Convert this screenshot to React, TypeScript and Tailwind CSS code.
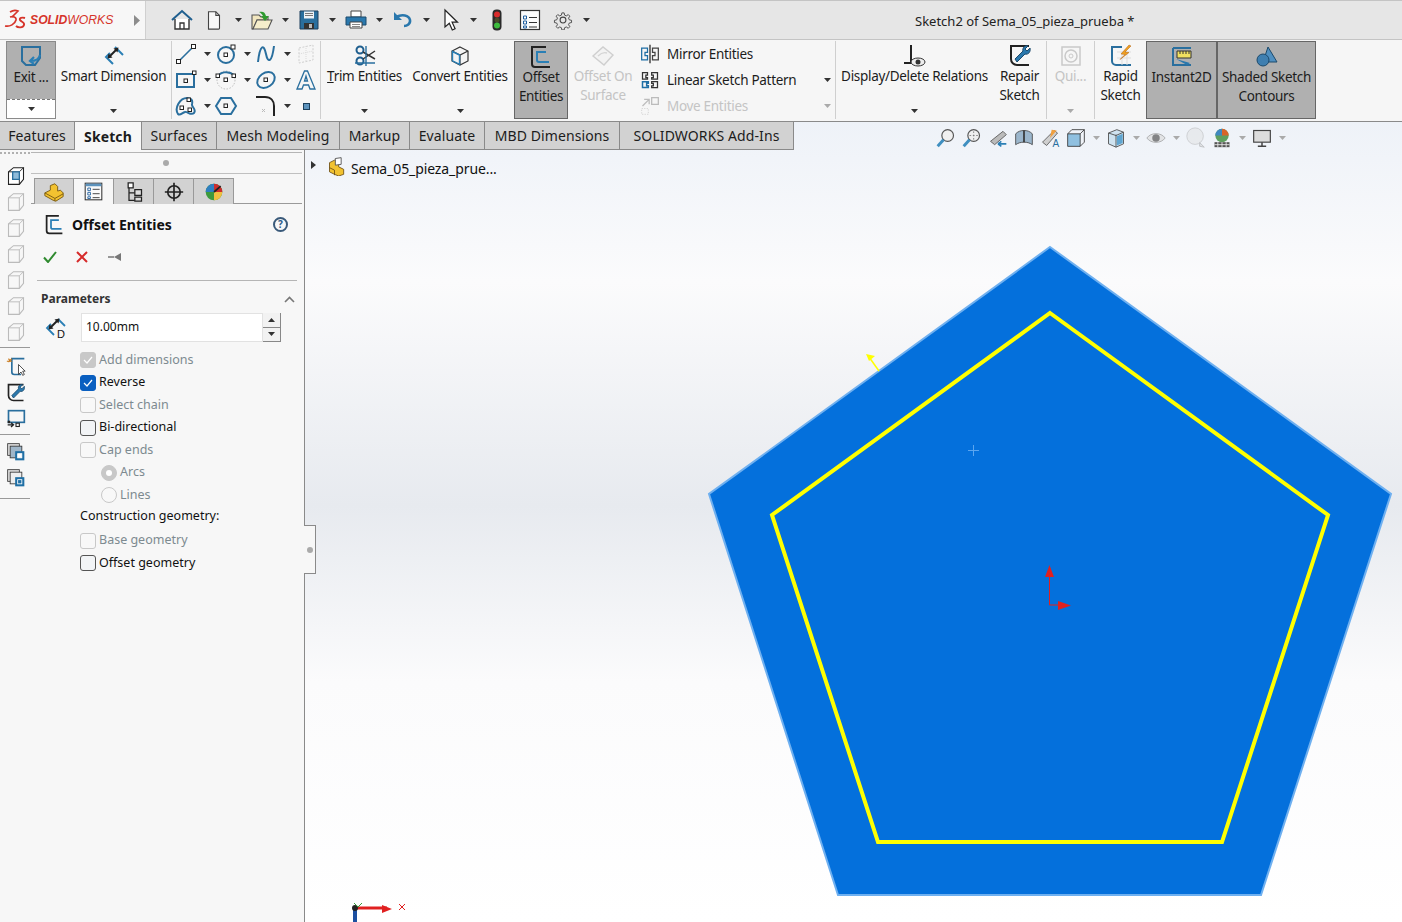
import React from "react";

const B = "#2a6f9e";

function Caret({ c = "#333" }: { c?: string }) {
  return (
    <svg width="7" height="4" viewBox="0 0 7 4" className="shrink-0">
      <path d="M0 0h7L3.5 4z" fill={c} />
    </svg>
  );
}

function Ico({ children, s = 24, o = 1 }: { children: React.ReactNode; s?: number; o?: number }) {
  return (
    <svg width={s} height={s} viewBox="0 0 24 24" fill="none" className="shrink-0" opacity={o}>
      {children}
    </svg>
  );
}

// ---- top bar icons
const Home = () => (
  <Ico>
    <path d="M2 12 12 3l10 9" stroke="#1f5f8f" strokeWidth="2" />
    <path d="M5 11v10h14V11" stroke="#333" strokeWidth="1.4" fill="#fff" />
    <path d="M10 21v-6h4v6" stroke="#333" strokeWidth="1.3" />
  </Ico>
);
const NewDoc = () => (
  <Ico s={22}>
    <path d="M6 3h8l4 4v14a1 1 0 0 1-1 1H6z" fill="#f8f8f8" stroke="#444" strokeWidth="1.2" />
    <path d="M14 3v4h4" stroke="#444" strokeWidth="1.2" />
  </Ico>
);
const OpenDoc = () => (
  <Ico>
    <path d="M2 7h7l2 2h7v3H7L3 21H2z" fill="#f1e6bf" stroke="#555" strokeWidth="1.1" />
    <path d="M7 12h15l-4 9H3z" fill="#f6eecb" stroke="#555" strokeWidth="1.1" />
    <path d="M9 4c4-1 6 0 7 4h3l-4 5-4-5h2c-1-2-2-3-4-4z" fill="#2f9a2f" />
  </Ico>
);
const Save = () => (
  <Ico>
    <path d="M3 3h18v18H3z" fill="#2a6f9e" stroke="#1c3f5c" />
    <path d="M7 3.5h10v7H7z" fill="#eef2f6" />
    <path d="M8 5.5h8M8 7.5h8" stroke="#777" />
    <path d="M7 15h10v6H7z" fill="#333" />
    <path d="M12 16h3v4h-3z" fill="#bbb" />
  </Ico>
);
const Printer = () => (
  <Ico>
    <path d="M7 3h10v6H7z" fill="#fff" stroke="#444" />
    <path d="M2 9h20v8H2z" fill="#2a78ad" stroke="#1c4a6c" />
    <path d="M6 14h12v6H6z" fill="#fff" stroke="#444" />
    <path d="M8 16.5h8M8 18.5h8" stroke="#888" />
  </Ico>
);
const Undo = () => (
  <Ico>
    <path d="M5 9c6-3 13-2 14 3 .6 4-3 6-6 6" stroke="#2a78ad" strokeWidth="2.6" />
    <path d="M3 4v8h8z" fill="#2a78ad" />
  </Ico>
);
const Cursor = () => (
  <Ico>
    <path d="M7 2v17l4.3-3.800 3 6.800 2.800-1.200-3-6.600H19.500z" fill="#fff" stroke="#222" strokeWidth="1.2" />
  </Ico>
);
const Light = () => (
  <Ico>
    <rect x="7.5" y="1.5" width="9" height="21" rx="4" fill="#2a2a2a" />
    <circle cx="12" cy="6.500" r="3" fill="#d92b2b" />
    <circle cx="12" cy="12" r="2.500" fill="#4a4a2a" />
    <circle cx="12" cy="17.500" r="3" fill="#3dbb3d" />
  </Ico>
);
const ListIco = ({ s = 24, head = false }: { s?: number; head?: boolean }) => (
  <Ico s={s}>
    <rect x="2.5" y="2.5" width="19" height="19" fill="#fbfbfb" stroke="#333" strokeWidth="1.2" />
    {head && <rect x="3" y="3" width="18" height="3" fill="#5d93bd" />}
    <path d="M5.500 8h3v3h-3zM5.500 13h3v3h-3zM5.500 18h3v2h-3z" stroke="#1f5f9f" />
    <path d="M11 9.500h8M11 14.500h8M11 19h8" stroke="#333" />
  </Ico>
);
const Gear = () => (
  <Ico s={20}>
    <circle cx="12" cy="12" r="3.500" stroke="#444" strokeWidth="1.300" />
    <path
      d="M10.500 2.500h3l.6 3 2.300 1 2.600-1.700 2.100 2.100-1.700 2.600 1 2.300 3 .6v3l-3 .6-1 2.300 1.700 2.600-2.100 2.100-2.600-1.700-2.300 1-.6 3h-3l-.6-3-2.300-1-2.600 1.700-2.100-2.100 1.700-2.600-1-2.300-3-.6v-3l3-.6 1-2.300-1.700-2.600 2.100-2.100 2.600 1.700 2.300-1z"
      stroke="#444"
      strokeWidth="1.200"
      transform="translate(1.200 1.200) scale(.9)"
    />
  </Ico>
);

// ---- ribbon icons
const ExitIco = () => (
  <Ico>
    <path d="M3 3h18v11l-5 7H7l-4-4z" stroke={B} strokeWidth="2" />
    <path d="M21 11c-1 4-4 6-9 6M15 13l-4 4 4 3" stroke="#2a7fb5" strokeWidth="2.200" />
  </Ico>
);
const SmartDim = () => (
  <Ico>
    <path d="M13 3l8 8" stroke="#2a7fb5" strokeWidth="2" />
    <path d="M8 9l-4 4 7 7" stroke="#2a7fb5" strokeWidth="2" />
    <path d="M8 12l6-6" stroke="#222" strokeWidth="2" />
    <path d="M5.500 14.500l1-5 4 4zM16.500 3.500l-1 5-4-4z" fill="#222" />
  </Ico>
);
const DimD = () => (
  <Ico>
    <path d="M14 3l7 7" stroke="#2a7fb5" strokeWidth="1.800" />
    <path d="M7 8l-4 4 7 7" stroke="#2a7fb5" strokeWidth="1.800" />
    <path d="M7 11l6-6" stroke="#222" strokeWidth="2" />
    <path d="M4.500 13.500l1-5 4 4zM15.500 2.500l-1 5-4-4z" fill="#222" />
    <text x="13" y="22" fontSize="11" fill="#111" fontFamily="Liberation Sans, sans-serif">D</text>
  </Ico>
);
const LineIco = () => (
  <Ico>
    <path d="M5 19 19 5" stroke={B} strokeWidth="1.600" />
    <rect x="2.5" y="17.5" width="4" height="4" fill="#fff" stroke="#222" />
    <rect x="17.5" y="2.5" width="4" height="4" fill="#fff" stroke="#222" />
  </Ico>
);
const CircleIco = () => (
  <Ico>
    <circle cx="12" cy="13" r="8" stroke={B} strokeWidth="2" />
    <rect x="10" y="11" width="3.5" height="3.5" fill="#fff" stroke="#222" />
    <rect x="17" y="3" width="4" height="4" fill="#fff" stroke="#222" />
  </Ico>
);
const SplineIco = () => (
  <Ico>
    <path d="M4 20C6 2 10 2 12 12s6 8 8-8" stroke={B} strokeWidth="2" />
  </Ico>
);
const PlaneIco = () => (
  <Ico o={0.35}>
    <path d="M5 6l14-3v15L5 21z" stroke="#888" strokeDasharray="2 1.500" />
    <path d="M5 12l14-3M12 4v16" stroke="#aaa" strokeDasharray="1 1" />
  </Ico>
);
const RectIco = () => (
  <Ico>
    <rect x="3" y="6" width="17" height="13" stroke={B} strokeWidth="2" />
    <rect x="10" y="11" width="3.5" height="3.5" stroke="#222" />
    <rect x="18.5" y="3" width="3.5" height="3.5" fill="#fff" stroke="#222" />
  </Ico>
);
const ArcIco = () => (
  <Ico>
    <circle cx="12" cy="12" r="9" stroke="#bbb" strokeDasharray="1.500 1.500" />
    <path d="M3 10C5 4 14 2 20 7" stroke={B} strokeWidth="2" />
    <rect x="2" y="6" width="3.5" height="3.5" fill="#fff" stroke="#222" />
    <rect x="10" y="10" width="3.5" height="3.5" fill="#fff" stroke="#222" />
    <rect x="18" y="6" width="3.5" height="3.5" fill="#fff" stroke="#222" />
  </Ico>
);
const EllipseIco = () => (
  <Ico>
    <ellipse cx="12" cy="12" rx="9.500" ry="7" stroke={B} strokeWidth="2" transform="rotate(-35 12 12)" />
    <rect x="10" y="10" width="3.5" height="3.5" stroke="#222" />
  </Ico>
);
const TextIco = () => (
  <Ico>
    <path d="M3 21 10.500 3h3L21 21h-5l-1.500-4h-5L8 21zM10.500 13h3L12 8z" stroke={B} strokeWidth="1.300" />
  </Ico>
);
const BlobIco = () => (
  <Ico>
    <path d="M4 20C0 14 6 4 13 4c4 0 6 2 5 6-1 3 5 5 2 9-3 3-7-2-9-1-3 1-5 4-7 2z" stroke={B} strokeWidth="2" />
    <rect x="6" y="12" width="3.5" height="3.5" fill="#fff" stroke="#222" />
    <rect x="13" y="4" width="3.5" height="3.5" fill="#fff" stroke="#222" />
    <rect x="14" y="14" width="3.5" height="3.5" fill="#fff" stroke="#222" />
  </Ico>
);
const HexIco = () => (
  <Ico>
    <path d="M7 4h10l5 8-5 8H7l-5-8z" stroke={B} strokeWidth="2" />
    <rect x="10" y="10" width="3.5" height="3.5" stroke="#222" />
  </Ico>
);
const FilletIco = () => (
  <Ico>
    <path d="M2 3h9c6 0 9 4 9 9v10" stroke="#222" strokeWidth="2" />
    <path d="M8 15l3 3M11 15l-3 3" stroke="#bbb" />
  </Ico>
);
const PointIco = () => (
  <svg width="7" height="7" className="shrink-0">
    <rect x=".5" y=".5" width="6" height="6" fill="#5d93bd" stroke="#1c3f5c" />
  </svg>
);
const TrimIco = () => (
  <Ico>
    <circle cx="7" cy="6" r="3.500" stroke="#1f5f8f" strokeWidth="2" />
    <circle cx="7" cy="17" r="3.500" stroke="#1f5f8f" strokeWidth="2" />
    <path d="M10 8l12 7M10 15 22 7" stroke="#333" strokeWidth="1.500" />
    <path d="M13 2v20M2 19h20" stroke={B} strokeWidth="1.400" />
  </Ico>
);
const ConvertIco = () => (
  <Ico>
    <path d="M12 3l8 4v10l-8 4-8-4V7z" fill="#f4f4f4" stroke="#333" strokeWidth="1.200" />
    <path d="M4 7l8 4 8-4M12 11v10" stroke="#333" strokeWidth="1.200" />
    <path d="M4.500 7.500 11.500 11v9.300l-7-3.500z" stroke="#2a7fb5" strokeWidth="1.400" />
  </Ico>
);
const OffsetIco = ({ s = 24 }: { s?: number }) => (
  <Ico s={s}>
    <path d="M21 22H6a3 3 0 0 1-3-3V2h14" stroke="#222" strokeWidth="2" />
    <path d="M20 17H10a2 2 0 0 1-2-2V7h9" stroke="#2a7fb5" strokeWidth="2" />
  </Ico>
);
const OffsetSurfIco = () => (
  <Ico o={0.35}>
    <path d="M2 12 12 3l10 8-9 10z" fill="#eee" stroke="#888" strokeWidth="1.400" />
    <path d="M7 12c3-3 6-4 9-3" stroke="#999" strokeWidth="1.400" />
  </Ico>
);
const MirrorIco = () => (
  <Ico s={20}>
    <path d="M12 1v22" stroke="#222" strokeWidth="1.500" />
    <path d="M2 5h7v5H6v4h3v5H2z" stroke="#1f6fa5" strokeWidth="1.500" />
    <path d="M22 5h-7v5h3v4h-3v5h7z" stroke="#444" strokeWidth="1.500" />
  </Ico>
);
const PatternIco = () => (
  <Ico s={20}>
    <path d="M3 3h6v3H7v3h2v2H3zM14 3h7v8h-7V9h2V6h-2z" stroke="#333" strokeWidth="1.500" />
    <path d="M3 14h7v2H8v3h2v2H3z" stroke="#1f6fa5" strokeWidth="1.800" />
    <path d="M14 14h7v7h-7v-2h2v-3h-2z" stroke="#333" strokeWidth="1.500" />
  </Ico>
);
const MoveIco = () => (
  <Ico s={20} o={0.4}>
    <path d="M14 2h8v8h-8z" stroke="#666" strokeWidth="1.500" />
    <path d="M3 12l8-8M5 4h6v6" stroke="#666" strokeWidth="1.500" />
    <path d="M2 15h8v7H2z" stroke="#999" strokeDasharray="1.500 1.500" />
  </Ico>
);
const RelIco = () => (
  <Ico>
    <path d="M8 1v18M1 19h14" stroke="#222" strokeWidth="2" />
    <ellipse cx="15" cy="18" rx="7" ry="4" fill="#eee" stroke="#333" />
    <circle cx="15" cy="18" r="2.500" fill="#333" />
  </Ico>
);
const RepairIco = ({ s = 24 }: { s?: number }) => (
  <Ico s={s}>
    <path d="M21 2H3v13a6 6 0 0 0 6 6h12" stroke="#222" strokeWidth="2" />
    <path d="M22 4l-3 3-2-2 3-3c-3-1-6 2-5 5l-8 8 2 3 8-8c3 1 6-2 5-6z" fill="#2a78ad" stroke="#1c4a6c" />
  </Ico>
);
const QuickIco = () => (
  <Ico o={0.4}>
    <rect x="3" y="3" width="18" height="18" stroke="#888" strokeWidth="1.500" />
    <circle cx="12" cy="12" r="6" stroke="#888" strokeWidth="1.500" />
    <circle cx="12" cy="12" r="2" stroke="#888" />
  </Ico>
);
const RapidIco = () => (
  <Ico>
    <path d="M22 21H7a4 4 0 0 1-4-4V3h10" stroke={B} strokeWidth="2" />
    <path d="M8 8h14M8 14h14M13 8v13M18 8v13" stroke="#ddd" />
    <path d="M20 1l-8 9 4 .5-5 5 9-7-4-.5 6-6z" fill="#f0a020" stroke="#b06010" strokeWidth=".5" />
  </Ico>
);
const Instant2DIco = () => (
  <Ico>
    <path d="M3 3h18" stroke={B} strokeWidth="2" />
    <path d="M3 3v17h18" stroke={B} strokeWidth="2" />
    <path d="M7 6h14v7H7z" fill="#f0e060" stroke="#333" />
    <path d="M10 6v3M13 6v3M16 6v3M19 6v3" stroke="#333" />
    <path d="M6 14l14 4-3 2z" fill="#2a78ad" />
  </Ico>
);
const ShadedIco = () => (
  <Ico>
    <path d="M13 2l9 15H8z" fill="#4f8fc0" stroke="#1c4a6c" />
    <circle cx="8" cy="15" r="6" fill="#3f7fb0" stroke="#1c4a6c" />
  </Ico>
);

// ---- view bar icons
const Glass = ({ dashed = false }: { dashed?: boolean }) => (
  <Ico s={20}>
    <circle cx="14" cy="9" r="7" fill="#f0f0f0" stroke="#555" strokeWidth="1.400" />
    {dashed && <path d="M14 4v10M9 9h10" stroke="#777" strokeDasharray="2 2" />}
    <path d="M9 14 2 22" stroke="#3f8fc0" strokeWidth="3.500" />
  </Ico>
);
const PrevView = () => (
  <Ico s={20}>
    <path d="M3 16 18 4l4 4L8 20z" fill="#bbb" stroke="#555" />
    <path d="M12 19h10M12 19l4-3M12 19l4 3" stroke="#2a7fb5" strokeWidth="2" />
  </Ico>
);
const SectionView = () => (
  <Ico s={20}>
    <path d="M2 7c3-3 6-4 10-4s7 1 10 4v13c-3-2-6-3-10-3S5 18 2 20z" fill="#9bb6cc" stroke="#444" />
    <path d="M12 3v14" stroke="#333" strokeWidth="2" />
  </Ico>
);
const DynIco = () => (
  <Ico s={20}>
    <path d="M3 17 17 3l4 3L8 21z" fill="#cfcfcf" stroke="#555" />
    <path d="M14 2l6 1-8 9z" fill="#f0a040" />
    <text x="15" y="23" fontSize="12" fill="#2a6f9e" fontFamily="Liberation Sans, sans-serif">A</text>
  </Ico>
);
const ViewOrient = () => (
  <Ico s={20}>
    <path d="M2 7h15v15H2z" fill="#8fc0e0" stroke="#333" />
    <path d="M2 7l5-5h15v15l-5 5M17 7l5-5" stroke="#333" />
  </Ico>
);
const DisplayStyle = () => (
  <Ico s={20}>
    <path d="M3 6l10-4 8 3v14l-9 4-9-4z" fill="#cfe3f0" stroke="#444" />
    <path d="M12 8v15" stroke="#444" />
    <path d="M3 6l9 3 9-4" stroke="#444" />
    <path d="M13 10l7-3v11l-7 3z" fill="#5fa5d0" />
  </Ico>
);
const Eye = () => (
  <Ico s={20} o={0.7}>
    <path d="M1 12c5-7 17-7 22 0-5 7-17 7-22 0z" fill="#ddd" stroke="#888" />
    <circle cx="12" cy="12" r="4.500" fill="#555" />
  </Ico>
);
const Sphere = () => (
  <Ico s={22} o={0.4}>
    <circle cx="11" cy="10" r="9" fill="#ddd" stroke="#999" />
    <path d="M16 17l5 5-5-1z" fill="#ccc" stroke="#777" />
  </Ico>
);
const Scene = () => (
  <Ico s={20}>
    <circle cx="12" cy="9" r="8" fill="#5f9f5f" />
    <path d="M12 1a8 8 0 0 1 8 8h-8z" fill="#d9642a" />
    <path d="M4 9a8 8 0 0 1 8-8v8z" fill="#3f88c0" />
    <path d="M3 17h18v6H3z" fill="#555" />
    <path d="M7 17v6M12 17v6M17 17v6M3 20h18" stroke="#eee" />
  </Ico>
);
const Monitor = () => (
  <Ico s={20}>
    <rect x="2" y="3" width="20" height="14" fill="#ddd" stroke="#444" strokeWidth="1.400" />
    <path d="M12 17v4M7 22h10" stroke="#444" strokeWidth="1.800" />
  </Ico>
);

// ---- left column
const CubeIco = ({ faded = false, s = 20 }: { faded?: boolean; s?: number }) => (
  <Ico s={s} o={faded ? 0.28 : 1}>
    <path d="M3 7l6-5h12v14l-5 6H3z" fill={faded ? "none" : "#fff"} stroke="#222" strokeWidth="1.300" />
    <path d="M3 7h13v15M16 7l5-5" stroke="#222" strokeWidth="1.100" />
    {!faded && <path d="M8 7h8v9H8z" fill="#8fbbd9" stroke={B} strokeWidth="1.600" />}
  </Ico>
);
const CopyA = ({ small = false }: { small?: boolean }) => (
  <Ico s={20}>
    <rect x="2" y="2" width="14" height="14" fill="#ddd" stroke="#333" />
    <rect x="5" y="5" width="14" height="14" fill={small ? "#eee" : "#9fb6c9"} stroke="#333" />
    <rect x="11" y="11" width="11" height="11" fill="#1f6fa5" />
    <rect x="14" y="14" width="5" height="5" fill={small ? "#1f6fa5" : "#fff"} stroke="#fff" />
  </Ico>
);
const CursorSketch = () => (
  <Ico s={20}>
    <path d="M22 2H7v16a3 3 0 0 0 3 3h8" stroke={B} strokeWidth="2" />
    <path d="M3 2l2 3M1 5h6M7 2 3 6" stroke="#c8781a" strokeWidth="1.300" />
    <path d="M15 9v12l3-3 2 4 2-1-2-4h3z" fill="#fff" stroke="#333" />
  </Ico>
);
const ViewSketch = () => (
  <Ico s={20}>
    <rect x="3" y="2" width="19" height="14" stroke={B} strokeWidth="2" />
    <path d="M2 19h6M6 16.500 9 19l-3 2.500" stroke="#222" strokeWidth="1.500" />
    <rect x="12" y="17" width="4" height="4" stroke="#222" strokeWidth="1.300" />
    <rect x="2" y="14" width="3" height="3" fill="#222" />
  </Ico>
);

// ---- property manager tabs
const PartIco = () => (
  <Ico s={22}>
    <path d="M2 13l6-3V5l5-2 3 3v5l3-1 3 3v4l-8 5-3-1-9-5z" fill="#f2c230" stroke="#7a5a10" />
    <path d="M2 13l11 6 9-5M13 19v3" stroke="#7a5a10" />
  </Ico>
);
const TreeIco = () => (
  <Ico s={20}>
    <path d="M5 1h6v6H5z" fill="#fff" stroke="#222" strokeWidth="1.500" />
    <path d="M6 7v15h7M6 13h7" stroke="#222" strokeWidth="1.500" />
    <path d="M13 9h8v7h-8zM13 18h8v5h-8z" fill="#ddd" stroke="#222" strokeWidth="1.500" />
  </Ico>
);
const Cross = () => (
  <Ico s={20}>
    <circle cx="12" cy="12" r="7.500" stroke="#222" strokeWidth="2" />
    <path d="M12 1v22M1 12h22" stroke="#222" strokeWidth="2" />
  </Ico>
);
const PieIco = () => (
  <Ico s={20}>
    <circle cx="12" cy="12" r="10" fill="#3d9a3d" />
    <path d="M12 2a10 10 0 0 1 10 10H12z" fill="#cc2d2d" />
    <path d="M2 12a10 10 0 0 1 10-10v10z" fill="#2f7fc0" />
    <path d="M12 12h10a10 10 0 0 1-10 10z" fill="#f0c040" />
    <path d="M12 12 20 5" stroke="#222" strokeWidth="2" />
  </Ico>
);

function RibbonBtn({
  w,
  icon,
  lines,
  caret,
  active,
  muted,
  grey,
}: {
  w: string;
  icon?: React.ReactNode;
  lines: React.ReactNode[];
  caret?: boolean;
  active?: boolean;
  muted?: boolean;
  grey?: boolean;
}) {
  return (
    <div
      className={`${w} shrink-0 h-[78px] flex flex-col items-center ${
        active ? "bg-[#b0b0b0] border border-[#666666]" : ""
      }`}
    >
      <div className="h-[26px] flex items-center justify-center pt-[3px]">{icon}</div>
      <div className={`h-[39px] text-center leading-[19px] whitespace-nowrap ${muted ? "text-[#c4c4c4]" : "text-[#1c1c1c]"}`}>
        {lines.map((l, i) => (
          <div key={i}>{l}</div>
        ))}
      </div>
      {caret && (
        <div className="h-[10px] flex items-center">
          <Caret c={grey ? "#aaa" : "#333"} />
        </div>
      )}
    </div>
  );
}

function Vsep() {
  return <div className="w-px h-[78px] bg-[#cfcfcf] shrink-0" />;
}

function SketchTool({ icon, caret = true }: { icon: React.ReactNode; caret?: boolean }) {
  return (
    <div className="w-[40px] h-[26px] flex items-center justify-start">
      <div className="w-[24px] flex justify-center">{icon}</div>
      <div className="w-[13px] flex justify-end">{caret && <Caret />}</div>
    </div>
  );
}

function StackRow({ icon, label, caret, muted }: { icon: React.ReactNode; label: string; caret?: boolean; muted?: boolean }) {
  return (
    <div className="h-[26px] flex items-center">
      <div className="w-[20px] flex justify-center">{icon}</div>
      <span className={`ml-[7px] w-[157px] whitespace-nowrap ${muted ? "text-[#c4c4c4]" : "text-[#1c1c1c]"}`}>{label}</span>
      {caret && <Caret c={muted ? "#aaa" : "#333"} />}
    </div>
  );
}

function Tab({ w, label, active }: { w: string; label: string; active?: boolean }) {
  return (
    <div
      className={`${w} h-[28px] flex items-center justify-center border-r border-[#8a8a8a] whitespace-nowrap text-[#1c1c1c] ${
        active ? "bg-[#f7f7f7] font-bold" : "bg-[#d2d2d2] border-b"
      }`}
    >
      {label}
    </div>
  );
}

function Check({ label, state, muted }: { label: string; state: "on" | "greyon" | "off" | "greyoff"; muted?: boolean }) {
  const box =
    state === "on"
      ? "bg-[#0a5fc0] border-[#0a5fc0]"
      : state === "greyon"
        ? "bg-[#c8c8c8] border-[#c8c8c8]"
        : state === "off"
          ? "bg-[#f2f4f6] border-[#555555]"
          : "bg-[#f8f8f8] border-[#c8c8c8]";
  return (
    <div className="h-[22.5px] flex items-center">
      <div className={`w-[16px] h-[16px] rounded-[3px] border flex items-center justify-center ${box}`}>
        {(state === "on" || state === "greyon") && (
          <svg width="10" height="8" viewBox="0 0 10 8">
            <path d="M1 4l3 3 5-6" stroke="#fff" strokeWidth="1.200" fill="none" />
          </svg>
        )}
      </div>
      <span className={`ml-[3px] text-[12.5px] ${muted ? "text-[#7d8a90]" : "text-[#111111]"}`}>{label}</span>
    </div>
  );
}

function Radio({ label, on }: { label: string; on?: boolean }) {
  return (
    <div className="h-[22.5px] flex items-center pl-[21px]">
      <div
        className={`w-[16px] h-[16px] rounded-full flex items-center justify-center border ${
          on ? "bg-[#c8c8c8] border-[#c8c8c8]" : "bg-[#f8f8f8] border-[#c8c8c8]"
        }`}
      >
        {on && <div className="w-[6px] h-[6px] rounded-full bg-white" />}
      </div>
      <span className="ml-[3px] text-[12.5px] text-[#7d8a90]">{label}</span>
    </div>
  );
}

function Quick({ w, icon, caret }: { w: string; icon: React.ReactNode; caret?: boolean }) {
  return (
    <div className={`${w} flex items-center justify-between shrink-0`}>
      {icon}
      {caret && <Caret />}
    </div>
  );
}

function View({ icon, caret }: { icon: React.ReactNode; caret?: boolean }) {
  return (
    <div className="flex items-center shrink-0">
      <div className="w-[26px] flex justify-center">{icon}</div>
      {caret && (
        <div className="w-[14px] flex justify-center">
          <Caret c="#aaa" />
        </div>
      )}
    </div>
  );
}

export default function App() {
  return (
    <div className="w-[1402px] h-[922px] overflow-hidden flex flex-col bg-white text-[14px] font-['Noto_Sans','Open_Sans',sans-serif]">
      {/* title bar */}
      <div className="h-[40px] shrink-0 flex bg-[#e6e6e6] border-t border-b border-[#c4c4c4]">
        <div className="w-[146px] shrink-0 bg-[#f7f7f7] border-r border-[#d0d0d0] flex items-center">
          <svg width="28" height="26" viewBox="0 4 28 26" fill="none" className="shrink-0">
            <path d="M10 9c3-2 6-2 8-1l-6 6" stroke="#d6342a" strokeWidth="1.700" />
            <path d="M5 23c5 1 10-2 11-6 .5-3-3-4-6-3" stroke="#d6342a" strokeWidth="1.700" />
            <path d="M25 15c-3-1-6 0-5 2s5 2 4 5-6 3-8 1" stroke="#d6342a" strokeWidth="1.900" />
          </svg>
          <span className="ml-[2px] pt-[1px] text-[12.2px] italic text-[#d6342a] font-['Liberation_Sans',sans-serif] whitespace-nowrap">
            <span className="font-bold">SOLID</span>WORKS
          </span>
          <svg width="7" height="11" viewBox="0 0 7 11" className="ml-[21px]">
            <path d="M0 0l6 5.500L0 11z" fill="#8c8c8c" />
          </svg>
        </div>
        <div className="flex items-center pl-[24px]">
          <Quick w="w-[33px]" icon={<Home />} />
          <Quick w="w-[39px]" icon={<NewDoc />} caret />
          <div className="w-[8px]" />
          <Quick w="w-[39px]" icon={<OpenDoc />} caret />
          <div className="w-[8px]" />
          <Quick w="w-[39px]" icon={<Save />} caret />
          <div className="w-[8px]" />
          <Quick w="w-[39px]" icon={<Printer />} caret />
          <div className="w-[8px]" />
          <Quick w="w-[39px]" icon={<Undo />} caret />
          <div className="w-[8px]" />
          <Quick w="w-[39px]" icon={<Cursor />} caret />
          <div className="w-[8px]" />
          <Quick w="w-[33px]" icon={<Light />} />
          <Quick w="w-[35px]" icon={<ListIco />} />
          <Quick w="w-[37px]" icon={<Gear />} caret />
        </div>
        <div className="ml-[325px] self-center pt-[3px] whitespace-nowrap text-[13px] text-[#222222]">Sketch2 of Sema_05_pieza_prueba *</div>
      </div>

      {/* ribbon */}
      <div className="h-[82px] shrink-0 bg-[#f6f6f6] border-b border-[#8a8a8a] flex pl-[6px] pt-[1px] text-[13.5px] tracking-[-0.3px]">
        <div className="w-[50px] h-[78px] shrink-0 border border-[#8a8a8a] flex flex-col bg-white">
          <div className="h-[57px] bg-[#b0b0b0] flex flex-col items-center pt-[2px]">
            <ExitIco />
            <span className="leading-[19px] text-[#1c1c1c]">Exit ...</span>
          </div>
          <div className="flex-1 flex items-center justify-center border-t border-dashed border-[#777777]">
            <Caret />
          </div>
        </div>
        <RibbonBtn w="w-[115px]" icon={<SmartDim />} lines={["Smart Dimension"]} caret />
        <Vsep />
        <div className="w-[148px] shrink-0 grid grid-cols-[40px_40px_40px_26px] pl-[2px] content-start">
          <SketchTool icon={<LineIco />} />
          <SketchTool icon={<CircleIco />} />
          <SketchTool icon={<SplineIco />} />
          <SketchTool icon={<PlaneIco />} caret={false} />
          <SketchTool icon={<RectIco />} />
          <SketchTool icon={<ArcIco />} />
          <SketchTool icon={<EllipseIco />} />
          <SketchTool icon={<TextIco />} caret={false} />
          <SketchTool icon={<BlobIco />} />
          <SketchTool icon={<HexIco />} caret={false} />
          <SketchTool icon={<FilletIco />} />
          <SketchTool icon={<PointIco />} caret={false} />
        </div>
        <Vsep />
        <RibbonBtn w="w-[87px]" icon={<TrimIco />} lines={[<><u>T</u>rim Entities</>]} caret />
        <RibbonBtn w="w-[104px]" icon={<ConvertIco />} lines={["Convert Entities"]} caret />
        <div className="w-[2px]" />
        <RibbonBtn w="w-[54px]" icon={<OffsetIco />} lines={["Offset", "Entities"]} active />
        <div className="w-[5px]" />
        <RibbonBtn w="w-[60px]" icon={<OffsetSurfIco />} lines={["Offset On", "Surface"]} muted />
        <div className="w-[7px]" />
        <div className="w-[195px] shrink-0">
          <StackRow icon={<MirrorIco />} label="Mirror Entities" />
          <StackRow icon={<PatternIco />} label="Linear Sketch Pattern" caret />
          <StackRow icon={<MoveIco />} label="Move Entities" caret muted />
        </div>
        <Vsep />
        <RibbonBtn w="w-[157px]" icon={<RelIco />} lines={["Display/Delete Relations"]} caret />
        <RibbonBtn w="w-[53px]" icon={<RepairIco />} lines={["Repair", "Sketch"]} />
        <Vsep />
        <RibbonBtn w="w-[47px]" icon={<QuickIco />} lines={["Qui..."]} muted caret grey />
        <Vsep />
        <RibbonBtn w="w-[51px]" icon={<RapidIco />} lines={["Rapid", "Sketch"]} />
        <RibbonBtn w="w-[71px]" icon={<Instant2DIco />} lines={["Instant2D"]} active />
        <RibbonBtn w="w-[99px]" icon={<ShadedIco />} lines={["Shaded Sketch", "Contours"]} active />
      </div>

      {/* graphics area with tabs, panel and canvas */}
      <div className="flex-1 flex flex-col bg-[linear-gradient(180deg,#eef2f8_0%,#fbfbfc_20%,#e7eaef_48%,#fbfbfc_70%,#ffffff_100%)]">
        <div className="h-[28px] shrink-0 flex">
          <div className="flex tracking-[0.1px]">
            <Tab w="w-[75px]" label="Features" />
            <Tab w="w-[67px]" label="Sketch" active />
            <Tab w="w-[75px]" label="Surfaces" />
            <Tab w="w-[123px]" label="Mesh Modeling" />
            <Tab w="w-[70px]" label="Markup" />
            <Tab w="w-[75px]" label="Evaluate" />
            <Tab w="w-[135px]" label="MBD Dimensions" />
            <Tab w="w-[174px]" label="SOLIDWORKS Add-Ins" />
          </div>
          <div className="flex items-center ml-[139px] pt-[4px]">
            <View icon={<Glass />} />
            <View icon={<Glass dashed />} />
            <View icon={<PrevView />} />
            <View icon={<SectionView />} />
            <View icon={<DynIco />} />
            <View icon={<ViewOrient />} caret />
            <View icon={<DisplayStyle />} caret />
            <View icon={<Eye />} caret />
            <View icon={<Sphere />} />
            <View icon={<Scene />} caret />
            <View icon={<Monitor />} caret />
          </div>
        </div>

        <div className="flex-1 flex relative">
          {/* left icon column + property manager */}
          <div className="w-[305px] shrink-0 bg-[#f7f7f7] border-r border-[#8a8a8a] flex relative">
            <div className="w-[31px] shrink-0 pt-[2px] flex flex-col items-center">
              <div className="w-[30px] h-[2px] border-t-2 border-dotted border-[#b0b0b0] mb-[12px] self-start" />
              <div className="flex flex-col gap-[6px] w-full items-center">
                <CubeIco />
                <CubeIco faded />
                <CubeIco faded />
                <CubeIco faded />
                <CubeIco faded />
                <CubeIco faded />
                <CubeIco faded />
              </div>
              <div className="w-[30px] h-px bg-[#999999] mt-[5px] mb-[9px] self-start" />
              <div className="flex flex-col gap-[6px] items-center">
                <CursorSketch />
                <RepairIco s={20} />
                <ViewSketch />
              </div>
              <div className="w-[30px] h-px bg-[#999999] mt-[5px] mb-[7px] self-start" />
              <div className="flex flex-col gap-[6px] items-center">
                <CopyA />
                <CopyA small />
              </div>
              <div className="w-[30px] h-px bg-[#999999] mt-[10px] self-start" />
            </div>

            <div className="flex-1 flex flex-col">
              <div className="h-[3px] border-b border-[#b5b5b5] mr-[2px]" />
              <div className="h-[21px] flex items-center justify-center pr-[2px] border-b border-[#c0c0c0] mr-[2px]">
                <div className="w-[6px] h-[6px] rounded-full bg-[#aaaaaa]" />
              </div>
              <div className="mt-[4px] h-[26px] flex pl-[3px] border-b border-[#9a9a9a] mr-[2px]">
                <div className="w-[40px] h-[26px] bg-[#d2d2d2] border border-b-0 border-[#999999] flex items-center justify-center">
                  <PartIco />
                </div>
                <div className="w-[40px] h-[26px] bg-[#f7f7f7] border-t border-r border-[#999999] flex items-center justify-center">
                  <ListIco s={21} head />
                </div>
                <div className="w-[40px] h-[26px] bg-[#d2d2d2] border-t border-r border-[#999999] flex items-center justify-center">
                  <TreeIco />
                </div>
                <div className="w-[40px] h-[26px] bg-[#d2d2d2] border-t border-r border-[#999999] flex items-center justify-center">
                  <Cross />
                </div>
                <div className="w-[40px] h-[26px] bg-[#d2d2d2] border-t border-r border-[#999999] flex items-center justify-center">
                  <PieIco />
                </div>
              </div>
              <div className="h-[38px] flex items-center pl-[13px] pr-[16px] pt-[2px]">
                <OffsetIco s={21} />
                <span className="ml-[7px] flex-1 font-bold text-[14px] text-[#111111]">Offset Entities</span>
                <div className="w-[15px] h-[15px] rounded-full border-2 border-[#3a5a7a] flex items-center justify-center text-[10px] font-bold text-[#2a5a8a] leading-none">
                  ?
                </div>
              </div>
              <div className="h-[39px] flex items-center pl-[12px] gap-[19px] border-b border-[#b5b5b5] ml-[6px] mr-[7px] pb-[8px]">
                <svg width="14" height="12" viewBox="0 0 14 12" fill="none" className="-ml-[6px]">
                  <path d="M1 6.500 5 11 13 1" stroke="#2f8a2f" strokeWidth="2" />
                </svg>
                <svg width="12" height="12" viewBox="0 0 12 12" fill="none">
                  <path d="M1 1l10 10M11 1 1 11" stroke="#d62a2a" strokeWidth="2" />
                </svg>
                <svg width="14" height="10" viewBox="0 0 14 10" fill="none" className="ml-[1px]">
                  <path d="M0 5h6" stroke="#777" strokeWidth="1.500" />
                  <path d="M6 5l7-4v8z" fill="#777" />
                </svg>
              </div>
              <div className="h-[32px] flex items-center pl-[10px] pr-[9px] pt-[4px]">
                <span className="flex-1 font-bold text-[12px] text-[#333333]">Parameters</span>
                <svg width="11" height="7" viewBox="0 0 11 7" fill="none">
                  <path d="M1 6l4.500-4.500L10 6" stroke="#777" strokeWidth="1.600" />
                </svg>
              </div>
              <div className="flex items-center h-[29px] pl-[13px]">
                <DimD />
                <div className="ml-[13px] w-[182px] h-[29px] bg-white border border-[#e2e2e2] flex items-center pl-[4px] pb-[2px] text-[12px] text-[#111111]">
                  10.00mm
                </div>
                <div className="w-[18px] h-[29px] flex flex-col border-r border-b border-[#888888]">
                  <div className="flex-1 bg-[#f2f2f2] flex items-center justify-center border-b border-[#888888]">
                    <svg width="7" height="4" viewBox="0 0 7 4"><path d="M0 4h7L3.500 0z" fill="#333" /></svg>
                  </div>
                  <div className="flex-1 bg-[#f2f2f2] flex items-center justify-center">
                    <Caret />
                  </div>
                </div>
              </div>
              <div className="pl-[49px] pt-[7px] flex flex-col">
                <Check label="Add dimensions" state="greyon" muted />
                <Check label="Reverse" state="on" />
                <Check label="Select chain" state="greyoff" muted />
                <Check label="Bi-directional" state="off" />
                <Check label="Cap ends" state="greyoff" muted />
                <Radio label="Arcs" on />
                <Radio label="Lines" />
                <div className="h-[20px] flex items-center text-[12.5px] text-[#111111]">Construction geometry:</div>
                <div className="h-[3px]" />
                <Check label="Base geometry" state="greyoff" muted />
                <Check label="Offset geometry" state="off" />
              </div>
            </div>
            {/* collapse tab on the panel edge */}
            <div className="absolute left-[304px] top-[375px] w-[12px] h-[49px] bg-[#f7f7f7] border border-l-0 border-[#8a8a8a] flex items-center justify-center">
              <div className="w-[6px] h-[6px] rounded-full bg-[#aaaaaa]" />
            </div>
          </div>

          {/* canvas */}
          <div className="flex-1 relative">
            <div className="flex items-center h-[36px] pl-[6px]">
              <svg width="5" height="8" viewBox="0 0 5 8" className="-mt-[7px]">
                <path d="M0 0l5 4-5 4z" fill="#333" />
              </svg>
              <div className="ml-[11px] -mt-[4px]">
                <Ico s={20}>
                  <path d="M3 8l6-3 5 3v5l6 3v6l-6 2-5-2-6-3z" fill="#f2c230" stroke="#6a4a10" />
                  <path d="M10 3l7-1v8l-7 1z" fill="#fff" stroke="#444" />
                  <path d="M3 14l6 3v6" stroke="#6a4a10" />
                </Ico>
              </div>
              <span className="ml-[4px] text-[#111111] tracking-[-0.1px]">Sema_05_pieza_prue...</span>
            </div>
            {/* sketch drawing, viewBox uses page coordinates */}
            <svg className="absolute left-0 top-0" width="1097" height="772" viewBox="305 150 1097 772" fill="none">
              <polygon points="1050,247 1391,494 1261,895 838,895 709,494" fill="#0470dc" stroke="#6fb0f0" strokeWidth="2" />
              <polygon points="1050,313 1328,515 1222,842 878,842 772,515" stroke="#ffff00" strokeWidth="4" />
              <path d="M968 450.500h11M973.500 445v11" stroke="#5aa5f0" strokeWidth="1" />
              <path d="M879 371 869 357" stroke="#ffff00" strokeWidth="1.500" />
              <path d="M866 354l9 2-6 5z" fill="#ffff00" />
              <path d="M1049.500 574v31h12" stroke="#e02020" strokeWidth="1" />
              <path d="M1049.500 565l4.500 12h-9zM1071 605.500l-13-4.500v9z" fill="#e02020" />
              <path d="M355 909v13" stroke="#1c4fa0" strokeWidth="4" />
              <path d="M355 908h32" stroke="#e02020" strokeWidth="3" />
              <path d="M392 909l-10-4v8z" fill="#e02020" />
              <circle cx="355" cy="908" r="3" fill="#222" />
              <path d="M354 903l4 4M362 903l-4 4" stroke="#3a9a3a" strokeWidth="1" />
              <path d="M399 904l6 6M405 904l-6 6" stroke="#e02020" strokeWidth="1" />
            </svg>
          </div>
        </div>
      </div>
    </div>
  );
}
